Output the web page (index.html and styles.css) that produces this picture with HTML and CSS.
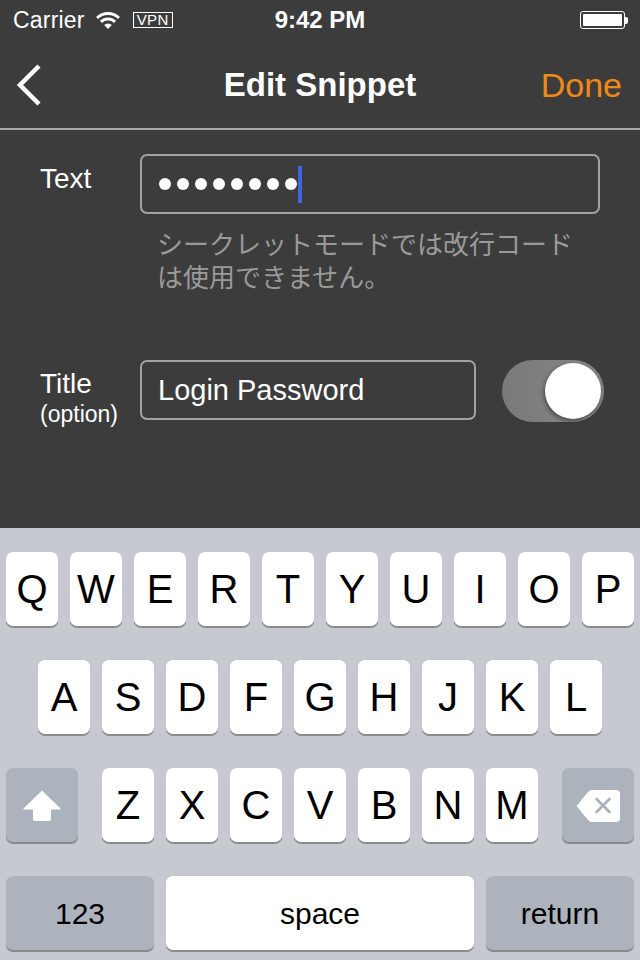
FILE: index.html
```html
<!DOCTYPE html>
<html lang="ja">
<head>
<meta charset="utf-8">
<title>Edit Snippet</title>
<link rel="stylesheet" href="styles.css">
</head>
<body>
<div class="screen">
  <div class="status">
    <div class="status-left">
      <span class="carrier">Carrier</span>
      <svg class="wifi" width="24" height="18" viewBox="0 0 24 18">
        <path d="M1.04 7.04 A15.5 15.5 0 0 1 22.96 7.04" stroke="#fff" stroke-width="3" fill="none"/>
        <path d="M4.93 10.93 A10 10 0 0 1 19.07 10.93" stroke="#fff" stroke-width="3" fill="none"/>
        <path d="M12 18 L8.1 14.1 A5.5 5.5 0 0 1 15.9 14.1 Z" fill="#fff"/>
      </svg>
      <span class="vpn">VPN</span>
    </div>
    <div class="time">9:42 PM</div>
    <div class="status-right">
      <div class="battery"><div class="battery-fill"></div></div>
      <div class="battery-nub"></div>
    </div>
  </div>

  <div class="nav">
    <div class="nav-left">
      <svg width="28" height="42" viewBox="0 0 28 42">
        <polyline points="24,2 5,21 24,40" fill="none" stroke="#fff" stroke-width="4.5" stroke-linecap="butt" stroke-linejoin="miter"/>
      </svg>
    </div>
    <div class="nav-title">Edit Snippet</div>
    <div class="nav-right">Done</div>
  </div>

  <div class="content">
    <div class="form-row">
      <div class="label label-text">Text</div>
      <div class="field-col">
        <div class="field field-wide">
          <span class="dot"></span><span class="dot"></span><span class="dot"></span><span class="dot"></span><span class="dot"></span><span class="dot"></span><span class="dot"></span><span class="dot"></span><span class="cursor"></span>
        </div>
        <div class="hint">
          <div class="hint-line">シークレットモードでは改行コード</div>
          <div class="hint-line">は使用できません。</div>
        </div>
      </div>
    </div>
    <div class="form-row row-title">
      <div class="label label-title">
        <div class="label-main">Title</div>
        <div class="label-sub">(option)</div>
      </div>
      <div class="field field-short"><span class="field-text">Login Password</span></div>
      <div class="toggle"><div class="thumb"></div></div>
    </div>
  </div>

  <div class="keyboard">
    <div class="krow">
      <div class="key">Q</div><div class="key">W</div><div class="key">E</div><div class="key">R</div><div class="key">T</div><div class="key">Y</div><div class="key">U</div><div class="key">I</div><div class="key">O</div><div class="key">P</div>
    </div>
    <div class="krow krow-center">
      <div class="key">A</div><div class="key">S</div><div class="key">D</div><div class="key">F</div><div class="key">G</div><div class="key">H</div><div class="key">J</div><div class="key">K</div><div class="key">L</div>
    </div>
    <div class="krow krow-split">
      <div class="key key-fn key-mod">
        <svg width="38" height="31" viewBox="0 0 38 31">
          <path d="M19 0.5 L37.5 18.5 Q38 19.5 37 19.5 L28 19.5 L28 29 Q28 31 26 31 L12 31 Q10 31 10 29 L10 19.5 L1 19.5 Q0 19.5 0.5 18.5 Z" fill="#fff"/>
        </svg>
      </div>
      <div class="letters">
        <div class="key">Z</div><div class="key">X</div><div class="key">C</div><div class="key">V</div><div class="key">B</div><div class="key">N</div><div class="key">M</div>
      </div>
      <div class="key key-fn key-mod">
        <svg width="44" height="32" viewBox="0 0 44 32">
          <path d="M0.5 16 L12 2 Q13.5 0 16 0 L40 0 Q44 0 44 4 L44 28 Q44 32 40 32 L16 32 Q13.5 32 12 30 Z" fill="#fff"/>
          <path d="M20.5 9 L33.5 22 M33.5 9 L20.5 22" stroke="#abb1bb" stroke-width="2.6" stroke-linecap="round"/>
        </svg>
      </div>
    </div>
    <div class="krow krow-bottom">
      <div class="key key-fn key-wide">123</div>
      <div class="key key-space">space</div>
      <div class="key key-fn key-wide">return</div>
    </div>
  </div>
</div>
</body>
</html>
```

FILE: styles.css
```css
* { box-sizing: border-box; }
html, body { margin: 0; padding: 0; }
body {
  width: 640px;
  height: 960px;
  overflow: hidden;
  font-family: "Liberation Sans", Arial, sans-serif;
  background: #3c3c3c;
}
.screen {
  width: 640px;
  height: 960px;
  display: flex;
  flex-direction: column;
}

/* status bar */
.status {
  height: 40px;
  display: grid;
  grid-template-columns: 1fr auto 1fr;
  align-items: center;
  color: #fff;
  background: #3c3c3c;
}
.status-left {
  display: flex;
  align-items: center;
  padding-left: 13px;
}
.carrier {
  font-size: 23px;
  line-height: 40px;
  letter-spacing: 0.2px;
}
.wifi { margin-left: 11px; margin-top: -1px; }
.vpn {
  margin-left: 13px;
  border: 1.5px solid #fff;
  width: 40px;
  height: 16px;
  font-size: 15px;
  line-height: 14px;
  text-align: center;
  letter-spacing: 0.3px;
}
.time {
  font-size: 24px;
  font-weight: bold;
  line-height: 40px;
}
.status-right {
  display: flex;
  justify-content: flex-end;
  align-items: center;
  padding-right: 12px;
}
.battery {
  width: 45px;
  height: 18px;
  border: 1.5px solid #fff;
  border-radius: 3px;
  padding: 2px;
}
.battery-fill {
  width: 100%;
  height: 100%;
  background: #fff;
  border-radius: 1px;
}
.battery-nub {
  width: 3px;
  height: 7px;
  background: #fff;
  border-radius: 0 2px 2px 0;
}

/* nav */
.nav {
  height: 90px;
  display: grid;
  grid-template-columns: 1fr auto 1fr;
  align-items: center;
  border-bottom: 2px solid #a9a9a9;
  padding-top: 2px;
}
.nav-left {
  padding-left: 15px;
  display: flex;
  align-items: center;
}
.nav-title {
  color: #fff;
  font-size: 33px;
  font-weight: bold;
}
.nav-right {
  text-align: right;
  padding-right: 18px;
  color: #ef8a17;
  font-size: 34px;
}

/* content */
.content {
  flex: 1;
  background: #3c3c3c;
  padding: 24px 0 0 40px;
}
.form-row {
  display: flex;
  align-items: flex-start;
}
.label {
  width: 100px;
  color: #fff;
}
.label-text {
  font-size: 28px;
  line-height: 34px;
  margin-top: 8px;
}
.field {
  height: 60px;
  border: 2px solid #a2a2a2;
  border-radius: 7px;
  display: flex;
  align-items: center;
  padding-left: 17px;
}
.field-wide { width: 460px; }
.dot {
  width: 12px;
  height: 12px;
  border-radius: 50%;
  background: #fff;
  margin-right: 6px;
}
.dot:nth-child(8) { margin-right: 1px; }
.cursor {
  width: 4px;
  height: 37px;
  background: #4166dd;
}
.hint {
  margin: 12px 0 0 17px;
  color: #9a9a9a;
  font-family: "Noto Sans CJK JP", "Noto Sans", sans-serif;
  font-size: 26px;
  white-space: nowrap;
}
.hint-line {
  height: 33px;
  line-height: 33px;
}
.row-title { margin-top: 68px; }
.label-title { margin-top: 7px; }
.label-main {
  font-size: 28px;
  line-height: 34px;
}
.label-sub {
  font-size: 23px;
  line-height: 26px;
}
.field-short {
  width: 336px;
  padding-left: 16px;
}
.field-text {
  color: #fff;
  font-size: 29px;
}
.toggle {
  margin-left: 26px;
  width: 102px;
  height: 62px;
  border-radius: 31px;
  background: linear-gradient(90deg, #7a7a7a, #858585);
  position: relative;
}
.thumb {
  position: absolute;
  right: 3px;
  top: 3px;
  width: 56px;
  height: 56px;
  border-radius: 50%;
  background: #fff;
  box-shadow: -1px 2px 4px rgba(0,0,0,0.45);
}

/* keyboard */
.keyboard {
  height: 432px;
  background: #c6c9d0;
  padding-top: 24px;
  display: flex;
  flex-direction: column;
  gap: 32px;
}
.krow {
  display: flex;
  gap: 12px;
  padding: 0 6px;
  height: 76px;
}
.krow-center { justify-content: center; }
.krow-split { justify-content: space-between; }
.letters { display: flex; gap: 12px; }
.key {
  width: 52px;
  height: 74px;
  background: #fff;
  border-radius: 7px;
  box-shadow: 0 2px 0 #898b8f;
  display: flex;
  align-items: center;
  justify-content: center;
  font-size: 40px;
  color: #000;
  padding-top: 1px;
}
.key-fn { background: #acb3bd; }
.key-mod { width: 72px; }
.key-wide {
  width: 148px;
  font-size: 30px;
}
.key-space {
  width: 308px;
  font-size: 30px;
}
```
